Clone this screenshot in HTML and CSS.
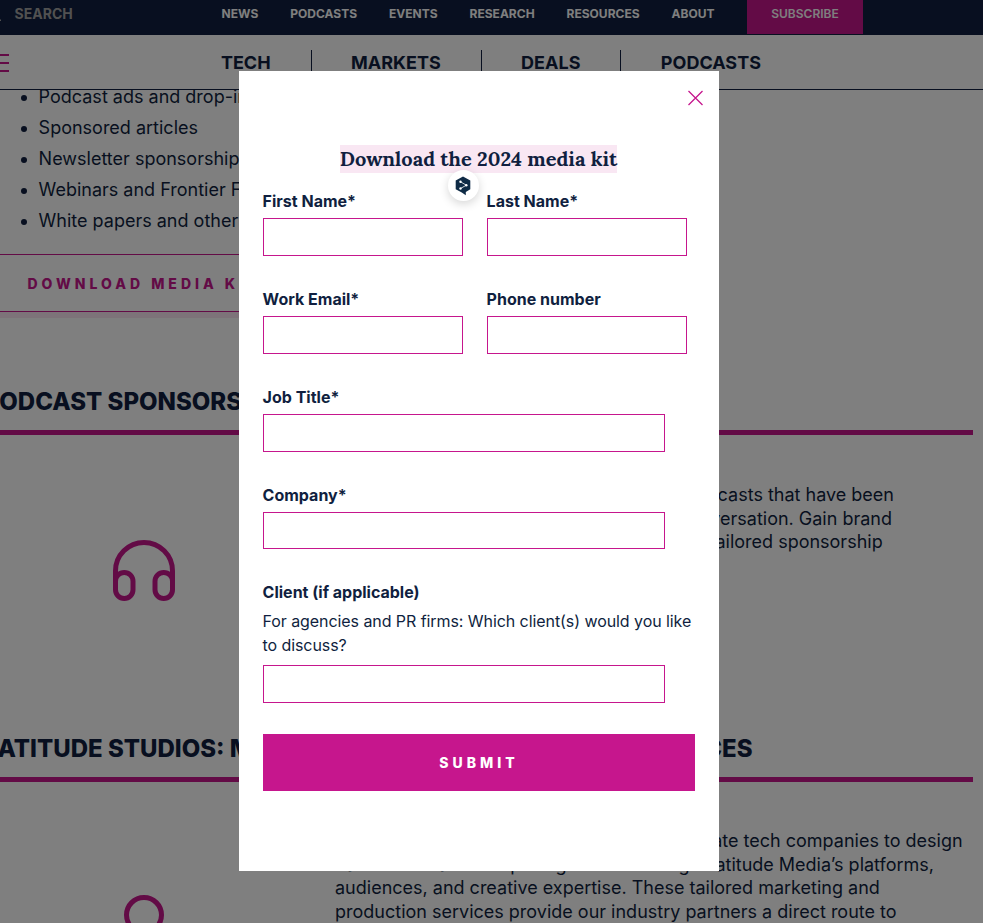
FILE: index.html
```
<!DOCTYPE html>
<html lang="en">
<head>
<meta charset="utf-8">
<title>Latitude Media</title>
<link rel="stylesheet" href="styles.css">
</head>
<body>
<header class="header">
  <div class="topbar">
    <div class="search"><svg class="search-icon" width="14" height="14" viewBox="0 0 14 14"><circle cx="6" cy="6" r="4.5"/><path d="M9.200 13.200L9.200 9.200L14 14"/></svg><span>SEARCH</span></div>
    <nav class="topnav"><a>NEWS</a><a>PODCASTS</a><a>EVENTS</a><a>RESEARCH</a><a>RESOURCES</a><a>ABOUT</a></nav>
    <a class="subscribe">SUBSCRIBE</a>
  </div>
  <div class="mainbar">
    <svg class="burger" width="9" height="20" viewBox="0 0 9 20"><path d="M0 2h9M0 10h9M0 18h9"/></svg>
    <nav class="mainnav"><a>TECH</a><a>MARKETS</a><a>DEALS</a><a>PODCASTS</a></nav>
  </div>
</header>
<main class="main">
  <ul class="offers">
    <li>Podcast ads and drop-ins</li>
    <li>Sponsored articles</li>
    <li>Newsletter sponsorships</li>
    <li>Webinars and Frontier Forums</li>
    <li>White papers and other content</li>
  </ul>
  <div class="download"><a>DOWNLOAD MEDIA KIT</a></div>
  <section class="section">
    <h2 class="h-podcast">PODCAST SPONSORSHIPS</h2>
    <div class="row">
      <svg class="headphones" width="64" height="64" viewBox="0 0 64 64"><path d="M3.500 44V32a28.500 28.500 0 0 1 57 0v12"/><rect x="3.500" y="33.500" width="17.500" height="26" rx="8.750"/><rect x="43" y="33.500" width="17.500" height="26" rx="8.750"/></svg>
      <div class="copy copy-podcast"><p class="a1">We produce leading podcasts that have been</p><p class="a2">shaping the industry conversation. Gain brand</p><p class="a3">exposure through tailored sponsorship</p></div>
    </div>
  </section>
  <section class="section last">
    <div class="split"><h2 class="h-studios">LATITUDE STUDIOS: MARKETING</h2><h2 class="h-services">SERVICES</h2></div>
    <div class="row">
      <svg class="person" width="64" height="64" viewBox="0 0 64 64"><circle cx="32" cy="22" r="17.500"/></svg>
      <div class="copy copy-studios"><p class="b1">We work with climate tech companies to design</p><p class="b2">and showcase compelling stories through Latitude Media’s platforms,</p><p>audiences, and creative expertise. These tailored marketing and</p><p>production services provide our industry partners a direct route to</p></div>
    </div>
  </section>
</main>
<div class="overlay"></div>
<div class="modal">
  <svg class="close" width="17" height="16" viewBox="0 0 17 16"><path d="M1.500 1l14 14M15.500 1l-14 14"/></svg>
  <h3 class="title"><span>Download the 2024 media kit</span></h3>
  <form>
    <div class="pair">
      <label class="field"><span class="name">First Name*</span><input type="text"></label>
      <label class="field"><span class="name">Last Name*</span><input type="text"></label>
    </div>
    <div class="pair">
      <label class="field"><span class="name">Work Email*</span><input type="text"></label>
      <label class="field"><span class="name">Phone number</span><input type="text"></label>
    </div>
    <label class="field wide"><span class="name">Job Title*</span><input type="text"></label>
    <label class="field wide company"><span class="name">Company*</span><input type="text"></label>
    <label class="field wide client"><span class="name">Client (if applicable)</span><span class="help">For agencies and PR firms: Which client(s) would you like to discuss?</span><input type="text"></label>
    <button class="submit" type="button">SUBMIT</button>
  </form>
  <div class="badge"><svg width="16" height="20" viewBox="0 0 16 20"><path class="hex" d="M8 .5L15.300 4.500V13.200L10.800 16V19.300L6.800 16.600L.7 13.200V4.500Z"/><path class="link" d="M5.500 5.800L11.300 9.200L5.500 12.500"/><circle cx="5.500" cy="5.800" r="1.200"/><circle cx="11.300" cy="9.200" r="1.200"/><circle cx="5.500" cy="12.500" r="1.200"/></svg></div>
</div>
</body>
</html>
```
FILE: styles.css
```
* { box-sizing: border-box; }
body { margin: 0; width: 983px; height: 923px; overflow: hidden; position: relative; background: #fff; color: #101f40; font-family: Inter, sans-serif; }
h2, h3, p, ul { margin: 0; padding: 0; }

.header { position: relative; z-index: 1; height: 90px; background: #fff; border-bottom: 1px solid #101f40; }
.topbar { height: 35px; background: #101f40; display: flex; color: #fff; font-size: 12px; font-weight: 700; line-height: 28px; }
.search { width: 221.600px; display: flex; font-size: 14px; font-weight: 700; color: #a3a3a3; }
.search-icon { margin: 7px 13.600px 0 -13px; fill: none; stroke: #a3a3a3; stroke-width: 1.5; }
.topnav { width: 525.400px; display: flex; gap: 32px; }
.subscribe { width: 116px; height: 34px; background: #c6168d; text-align: center; font-weight: 600; }
.mainbar { display: flex; height: 54px; }
.burger { margin-top: 18px; fill: none; stroke: #c6168d; stroke-width: 2; }
.mainnav { display: flex; margin: 15px 0 0 171.500px; font-size: 18px; font-weight: 700; line-height: 25px; }
.mainnav a { padding: 0 40px 0 39.400px; border-left: 1px solid #101f40; height: 24px; }
.mainnav a:first-child { border-left-color: transparent; }

.main { height: 842px; margin-top: -9px; overflow: hidden; }
.offers { padding-left: 38.600px; font-size: 18px; line-height: 31px; }
.download { margin-top: 18px; width: 300px; height: 64px; border-bottom: 6px solid #fbe6f3; }
.download a { display: block; height: 58px; padding-left: 27.500px; border: solid #c6168d; border-width: 1px 0; color: #c6168d; font-size: 14px; font-weight: 800; letter-spacing: 4px; line-height: 57px; white-space: nowrap; }
.section { height: 347px; padding-top: 67px; }
.section h2 { font-size: 24px; font-weight: 800; line-height: 34px; white-space: nowrap; }
.section .h-podcast { margin-left: -16.400px; }
.section .h-studios { margin-left: -16px; width: 500px; }
.split { display: flex; justify-content: space-between; width: 752.600px; }
.row { display: flex; margin-top: 11px; width: 973px; height: 235px; border-top: 5px solid #c6168d; }
.last { height: 265px; }
.last .row { height: 145px; }
.headphones, .person { flex: none; fill: none; stroke: #c6168d; stroke-width: 5; }
.headphones { margin: 104px 0 0 112px; }
.person { margin: 111px 0 0 112px; }
.copy { margin: 48.400px 0 0 159px; font-size: 18px; line-height: 23.400px; white-space: nowrap; }
.copy-studios { margin-top: 47.400px; }
.copy-podcast p { text-align: right; }
.a1 { width: 559px; }
.a2 { width: 557px; }
.a3 { width: 547.700px; }
.b1 { width: 627.600px; text-align: right; }
.b2 { width: 599px; text-align: right; }

.overlay { position: absolute; z-index: 2; inset: 0; background: rgba(0, 0, 0, .5); }
.modal { position: absolute; z-index: 3; left: 239px; top: 71px; width: 480px; height: 800px; padding: 74px 24px 0; background: #fff; }
.close { position: absolute; right: 15px; top: 19px; fill: none; stroke: #c6168d; stroke-width: 1.3; }
.title { height: 44px; margin-left: -1px; text-align: center; font-family: Lora, "Liberation Serif", serif; font-size: 20px; font-weight: 700; line-height: 28px; }
.title span { display: inline-block; height: 28px; background: #f9e7f3; white-space: nowrap; }
.pair { display: flex; gap: 24px; }
.field { display: block; width: 200px; margin-bottom: 31px; font-size: 16px; line-height: 24px; }
.name { display: block; margin-left: -.4px; font-weight: 700; }
.field input { display: block; width: 100%; height: 38px; margin: 5px 0 0; padding: 0 8px; border: 1px solid #c6168d; border-radius: 0; background: #fff; }
.wide { width: 402px; }
.company input { height: 37px; }
.help { display: block; width: 434px; margin: 5px 0 0 -.5px; font-weight: 400; letter-spacing: -.07px; }
.client input { margin-top: 8px; }
.submit { display: block; width: 432px; height: 57px; padding: 0; border: 0; background: #c6168d; color: #fff; font: 800 14px/57px Inter, sans-serif; letter-spacing: 4px; }
.badge { position: absolute; left: 209px; top: 99px; width: 31px; height: 31px; border-radius: 50%; background: #fff; box-shadow: 0 3px 10px rgba(0, 0, 0, .16); display: flex; align-items: center; justify-content: center; }
.badge svg { margin-right: 1px; }
.hex { fill: #0f2b46; }
.link { fill: none; stroke: #fff; stroke-width: .8; }
.badge circle { fill: #fff; }
```
